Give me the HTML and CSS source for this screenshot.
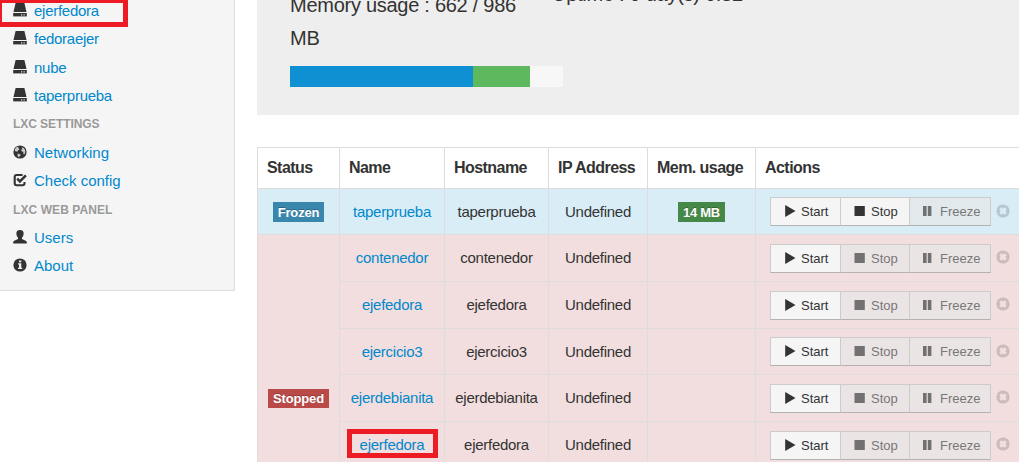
FILE: index.html
```
<!DOCTYPE html>
<html lang="en">
<head>
<meta charset="utf-8">
<title>LXC Web Panel</title>
<link rel="stylesheet" href="styles.css">
</head>
<body>
<svg class="sprite" aria-hidden="true">
  <symbol id="hdd" viewBox="0 0 14 14"><path d="M2.600 0h8.800l2.100 9H.5z"/><path d="M.2 10h13.600v3.400H.2z"/><path fill="#eee" d="M8 11.300h1.200v1.100H8zM10.500 11.300h1.200v1.100h-1.200z"/></symbol>
  <symbol id="globe" viewBox="0 0 14 14"><circle cx="7" cy="7" r="6.6"/><path fill="#ccc" d="M2.300 3.400 3.600 2.200 5.600 1.800 5.300 3 6.500 4.200 5 5.400 4.100 6.800 2.400 6.200 1.600 5.200zM8.600 2.200l2 .8L12.100 5l.2 2.300-1 2.200-1-.6.1-1.900L8.800 6.300 8 5.200 9.200 4zM4.600 8.600l2.400.6.8 1.100-1.300 1-.5 1-1.300-.7z"/></symbol>
  <symbol id="check" viewBox="0 0 14 14"><path fill="none" stroke="#333" stroke-width="2.1" d="M9.600 2H3.600Q1.700 2 1.700 3.900v6.400q0 1.900 1.900 1.900h6q1.900 0 1.900-1.900V9"/><path fill="none" stroke="#333" stroke-width="2.500" d="m4.200 5.700 2.700 2.700 6-6"/></symbol>
  <symbol id="user" viewBox="0 0 14 14"><path d="M7 0c2.700 0 3.800 1.500 3.600 3.800-.2 2.200-.8 3.100-1.600 4v1.100c.6.9 4.500 1.100 4.800 3.200v1.300H.2v-1.300c.3-2.100 4.200-2.300 4.800-3.200V7.800c-.8-.9-1.400-1.800-1.600-4C3.200 1.500 4.300 0 7 0z"/></symbol>
  <symbol id="info" viewBox="0 0 14 14"><circle cx="7" cy="7" r="6.6"/><path fill="#eee" d="M6 2.500h2.300v1.700H6zM5 5.200h3.300v4.500h1v1.200H5V9.700h1V6.400H5z"/></symbol>
  <symbol id="play" viewBox="0 0 14 14"><path d="M1.200 1v12l10.300-6z"/></symbol>
  <symbol id="stop" viewBox="0 0 14 14"><path d="M1.500 2h10.300v10H1.500z"/></symbol>
  <symbol id="pause" viewBox="0 0 14 14"><path d="M2 2h3.600v10H2zM6.800 2h3.600v10H6.800z"/></symbol>
  <symbol id="remove" viewBox="0 0 14 14"><path fill-rule="evenodd" d="M7 .4a6.600 6.600 0 1 0 0 13.200A6.600 6.600 0 0 0 7 .4zM5.200 3.300 7 4.600 8.800 3.300l1.900 1.900L9.400 7l1.300 1.800-1.900 1.900L7 9.400l-1.800 1.300-1.900-1.900L4.600 7 3.300 5.200z"/></symbol>
</svg>
<div class="page">
  <nav class="sidebar">
    <a class="item tight"><svg><use href="#hdd"/></svg><span>ejerfedora</span><i class="mark mark-side"></i></a>
    <a class="item tight tall"><svg><use href="#hdd"/></svg><span>fedoraejer</span></a>
    <a class="item tight"><svg><use href="#hdd"/></svg><span>nube</span></a>
    <a class="item tight"><svg><use href="#hdd"/></svg><span>taperprueba</span></a>
    <h6 class="heading">LXC SETTINGS</h6>
    <a class="item"><svg><use href="#globe"/></svg><span>Networking</span></a>
    <a class="item"><svg><use href="#check"/></svg><span>Check config</span></a>
    <h6 class="heading last">LXC WEB PANEL</h6>
    <a class="item"><svg><use href="#user"/></svg><span>Users</span></a>
    <a class="item"><svg><use href="#info"/></svg><span>About</span></a>
  </nav>
  <main class="main">
    <section class="hero">
      <div class="memory">
        <p>Memory usage : 662 / 986<br>MB</p>
        <div class="progress"><div class="used"></div><div class="cached"></div></div>
      </div>
      <p class="uptime">Uptime : 0 day(s) 0:32</p>
    </section>
    <table class="containers">
      <colgroup><col class="c1"><col class="c2"><col class="c3"><col class="c4"><col class="c5"><col class="c6"></colgroup>
      <tr class="head"><th>Status</th><th>Name</th><th>Hostname</th><th>IP Address</th><th>Mem. usage</th><th>Actions</th></tr>
      <tr class="frozen"><td><b class="label info">Frozen</b></td><td><a>taperprueba</a></td><td>taperprueba</td><td>Undefined</td><td><b class="label success">14 MB</b></td><td><div class="actions"><div class="group"><span class="btn start"><svg><use href="#play"/></svg>Start</span><span class="btn stop"><svg><use href="#stop"/></svg>Stop</span><span class="btn freeze off"><svg><use href="#pause"/></svg>Freeze</span></div><svg class="remove"><use href="#remove"/></svg></div></td></tr>
      <tr class="stopped"><td rowspan="7"><b class="label important">Stopped</b></td><td><a>contenedor</a></td><td>contenedor</td><td>Undefined</td><td></td><td><div class="actions"><div class="group"><span class="btn start"><svg><use href="#play"/></svg>Start</span><span class="btn stop off"><svg><use href="#stop"/></svg>Stop</span><span class="btn freeze off"><svg><use href="#pause"/></svg>Freeze</span></div><svg class="remove"><use href="#remove"/></svg></div></td></tr>
      <tr class="stopped"><td><a>ejefedora</a></td><td>ejefedora</td><td>Undefined</td><td></td><td><div class="actions"><div class="group"><span class="btn start"><svg><use href="#play"/></svg>Start</span><span class="btn stop off"><svg><use href="#stop"/></svg>Stop</span><span class="btn freeze off"><svg><use href="#pause"/></svg>Freeze</span></div><svg class="remove"><use href="#remove"/></svg></div></td></tr>
      <tr class="stopped short"><td><a>ejercicio3</a></td><td>ejercicio3</td><td>Undefined</td><td></td><td><div class="actions"><div class="group"><span class="btn start"><svg><use href="#play"/></svg>Start</span><span class="btn stop off"><svg><use href="#stop"/></svg>Stop</span><span class="btn freeze off"><svg><use href="#pause"/></svg>Freeze</span></div><svg class="remove"><use href="#remove"/></svg></div></td></tr>
      <tr class="stopped"><td><a>ejerdebianita</a></td><td>ejerdebianita</td><td>Undefined</td><td></td><td><div class="actions"><div class="group"><span class="btn start"><svg><use href="#play"/></svg>Start</span><span class="btn stop off"><svg><use href="#stop"/></svg>Stop</span><span class="btn freeze off"><svg><use href="#pause"/></svg>Freeze</span></div><svg class="remove"><use href="#remove"/></svg></div></td></tr>
      <tr class="stopped"><td class="marked"><a>ejerfedora</a><i class="mark mark-row"></i></td><td>ejerfedora</td><td>Undefined</td><td></td><td><div class="actions"><div class="group"><span class="btn start"><svg><use href="#play"/></svg>Start</span><span class="btn stop off"><svg><use href="#stop"/></svg>Stop</span><span class="btn freeze off"><svg><use href="#pause"/></svg>Freeze</span></div><svg class="remove"><use href="#remove"/></svg></div></td></tr>
      <tr class="stopped"><td></td><td></td><td></td><td></td><td></td></tr>
      <tr class="stopped short"><td></td><td></td><td></td><td></td><td></td></tr>
    </table>
  </main>
</div>
</body>
</html>
```
FILE: styles.css
```
* { box-sizing: border-box; }
html, body { margin: 0; height: 462px; overflow: hidden; }
body { background: #fff; color: #333; font: 15px/20px "Liberation Sans", Arial, sans-serif; }
.sprite { display: none; }
svg { fill: #333; display: block; flex: none; width: 14px; height: 14px; }
a { color: #0088cc; }
.page { display: flex; gap: 22px; height: 462px; overflow: hidden; }

.sidebar { flex: none; width: 235px; height: 291px; background: #f5f5f5; border: solid #ddd; border-width: 0 1px 1px 0; overflow: hidden; }
.item { position: relative; display: flex; align-items: center; gap: 7px; height: 28px; padding-left: 13px; }
.item:first-child { height: 25px; padding-bottom: 3px; }
.item.tall { height: 29px; padding-bottom: 1px; }
.item svg { margin-top: -2px; }
.tight { letter-spacing: -.27px; }
.heading { margin: 0; height: 29px; padding: 2px 0 0 13px; font-size: 12px; line-height: 24px; letter-spacing: -.07px; color: #999; text-shadow: 0 1px 0 rgba(255,255,255,.5); }
.heading.last { padding-top: 3px; letter-spacing: .08px; }

.mark { position: absolute; border: 5px solid #ed1c24; }
.mark-side { left: -3px; top: -2px; width: 131px; height: 29px; }
.mark-row { left: 7px; top: 7px; width: 91px; height: 29px; }
.marked { position: relative; }

.main { flex: none; width: 800px; }
.hero { display: flex; height: 115px; background: #eee; padding-left: 33px; overflow: hidden; }
.hero p { margin: 0; font-size: 20px; line-height: 33px; letter-spacing: -.27px; }
.memory { width: 262px; margin-top: -11px; }
.progress { display: flex; width: 273px; height: 21px; margin-top: 11px; background: #f7f7f7; }
.used { width: 183px; background: #0e90d2; }
.cached { width: 57px; background: #5eb95e; }
.hero .uptime { margin-top: -22px; white-space: nowrap; }

.containers { width: 800px; margin-top: 32px; table-layout: fixed; border-spacing: 0; }
.c1 { width: 82px; } .c2 { width: 105px; } .c3 { width: 104px; } .c4 { width: 99px; } .c5 { width: 108px; } .c6 { width: 302px; }
th, td { padding: 0; border: solid #ddd; border-width: 1px 0 0 1px; text-align: center; vertical-align: middle; white-space: nowrap; }
th { text-align: left; padding-left: 9px; font-size: 16px; letter-spacing: -.55px; }
td { letter-spacing: -.27px; }
.head { height: 41px; }
.frozen { height: 46px; background: #d9edf7; }
.stopped { height: 47px; background: #f2dede; }
.stopped.short { height: 46px; }
.label { display: inline-block; height: 20px; padding: 0 5px; font-size: 13px; line-height: 21px; letter-spacing: -.17px; color: #fff; text-shadow: 0 -1px 0 rgba(0,0,0,.25); vertical-align: middle; }
.info { background: #3a87ad; }
.success { background: #468847; letter-spacing: -.3px; }
.important { background: #b94a48; height: 19px; line-height: 20px; }

.actions { display: flex; align-items: center; padding-left: 14px; gap: 5px; letter-spacing: 0; }
.group { display: flex; }
.btn { display: flex; align-items: center; gap: 3px; height: 29px; border: 1px solid #bbb; border-color: #ccc #ccc #b3b3b3 #ccc; background: #f5f5f5; font-size: 13px; line-height: 27px; }
.btn svg { margin-top: -1px; }
.btn + .btn { border-left: 0; }
.start { width: 71px; padding-left: 13px; }
.stop { width: 69px; padding-left: 12px; gap: 4px; }
.freeze { width: 81px; padding-left: 11px; gap: 5px; }
.off { background: rgba(230,230,230,.65); color: #777; }
.off svg { opacity: .65; }
.remove { opacity: .2; margin-top: -2px; }
```
